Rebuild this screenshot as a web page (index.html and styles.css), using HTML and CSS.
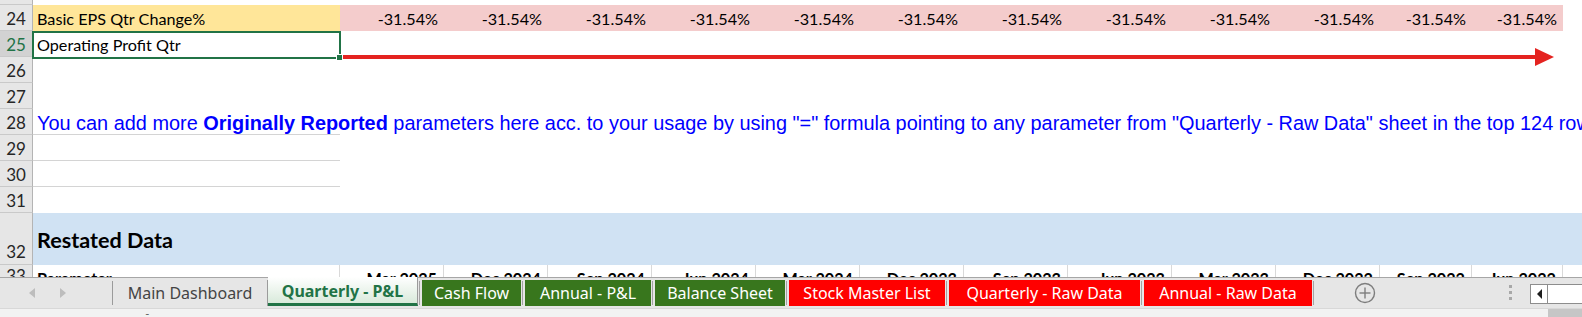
FILE: index.html
```html
<!DOCTYPE html>
<html>
<head>
<meta charset="utf-8">
<link rel="stylesheet" href="styles.css">
</head>
<body>
<div class="app">
  <div class="sheet">
    <div class="row r23">
      <div class="rh"></div><div class="c"></div>
    </div>
    <div class="row">
      <div class="rh">24</div>
      <div class="c yellow">Basic EPS Qtr Change%</div>
      <div class="c pink num">-31.54%</div>
      <div class="c pink num">-31.54%</div>
      <div class="c pink num">-31.54%</div>
      <div class="c pink num">-31.54%</div>
      <div class="c pink num">-31.54%</div>
      <div class="c pink num">-31.54%</div>
      <div class="c pink num">-31.54%</div>
      <div class="c pink num">-31.54%</div>
      <div class="c pink num">-31.54%</div>
      <div class="c pink num">-31.54%</div>
      <div class="c pink num">-31.54%</div>
      <div class="c pink num">-31.54%</div>
      <div class="c"></div>
    </div>
    <div class="row">
      <div class="rh rh-sel">25</div>
      <div class="c sel">Operating Profit Qtr<span class="handle"></span></div>
    </div>
    <div class="row">
      <div class="rh">26</div><div class="c"></div>
    </div>
    <div class="row">
      <div class="rh">27</div><div class="c"></div>
    </div>
    <div class="row">
      <div class="rh">28</div>
      <div class="c note lined"><span>You can add more <b>Originally Reported</b> parameters here acc. to your usage by using "=" formula pointing to any parameter from "Quarterly - Raw Data" sheet in the top 124 rows of the sheet</span></div>
    </div>
    <div class="row">
      <div class="rh">29</div><div class="c lined"></div>
    </div>
    <div class="row">
      <div class="rh">30</div><div class="c lined"></div>
    </div>
    <div class="row">
      <div class="rh">31</div><div class="c"></div>
    </div>
    <div class="row r32">
      <div class="rh">32</div>
      <div class="band"><span class="title">Restated Data</span></div>
    </div>
    <div class="row r33">
      <div class="rh">33</div>
      <div class="c hd vl">Parameter</div>
      <div class="c hd num vl">Mar 2025</div>
      <div class="c hd num vl">Dec 2024</div>
      <div class="c hd num vl">Sep 2024</div>
      <div class="c hd num vl">Jun 2024</div>
      <div class="c hd num vl">Mar 2024</div>
      <div class="c hd num vl">Dec 2023</div>
      <div class="c hd num vl">Sep 2023</div>
      <div class="c hd num vl">Jun 2023</div>
      <div class="c hd num vl">Mar 2023</div>
      <div class="c hd num vl">Dec 2022</div>
      <div class="c hd num vl">Sep 2022</div>
      <div class="c hd num vl">Jun 2022</div>
      <div class="c"></div>
    </div>
    <svg class="arrow" width="1214" height="20" viewBox="0 0 1214 20">
      <line x1="0" y1="9" x2="1197" y2="9" stroke="#e42320" stroke-width="4"/>
      <polygon points="1195,0 1214,9 1195,18" fill="#e42320"/>
    </svg>
  </div>
  <div class="tabbar">
    <div class="nav">
      <span class="tri tri-l"></span>
      <span class="tri tri-r"></span>
    </div>
    <div class="tab t-main">Main Dashboard</div>
    <div class="tab t-active">Quarterly - P&amp;L</div>
    <i class="sep"></i>
    <div class="tab green t-cash">Cash Flow</div>
    <i class="sep"></i>
    <div class="tab green t-apl">Annual - P&amp;L</div>
    <i class="sep"></i>
    <div class="tab green t-bs">Balance Sheet</div>
    <i class="sep"></i>
    <div class="tab red t-sml">Stock Master List</div>
    <i class="sep"></i>
    <div class="tab red t-qrd">Quarterly - Raw Data</div>
    <i class="sep"></i>
    <div class="tab red t-ard">Annual - Raw Data</div>
    <i class="sep"></i>
    <div class="addwrap">
      <svg width="22" height="22" viewBox="0 0 22 22">
        <circle cx="11" cy="11" r="9.5" fill="none" stroke="#7d7d7d" stroke-width="1.4"/>
        <line x1="11" y1="5.5" x2="11" y2="16.5" stroke="#7d7d7d" stroke-width="1.4"/>
        <line x1="5.5" y1="11" x2="16.5" y2="11" stroke="#7d7d7d" stroke-width="1.4"/>
      </svg>
    </div>
    <div class="dots"><i></i><i></i><i></i></div>
    <div class="hscroll">
      <div class="hbtn"><span class="btri"></span></div>
      <div class="htrack"></div>
    </div>
  </div>
  <div class="status">
    <span class="mark">ـ</span>
    <div class="corner"></div>
  </div>
</div>
</body>
</html>
```

FILE: styles.css
```css
* { box-sizing: border-box; margin: 0; padding: 0; }

html, body {
  margin: 0;
  width: 1582px;
  height: 317px;
  overflow: hidden;
  background: #ffffff;
  font-family: Lato, "Noto Sans", sans-serif;
}

.app {
  display: flex;
  flex-direction: column;
  width: 1582px;
  height: 317px;
}

.sheet {
  position: relative;
  height: 277px;
  flex: none;
  overflow: hidden;
}

.row {
  display: grid;
  grid-template-columns: 33px 307px repeat(10, 104px) 92px 91px 1fr;
  height: 26px;
}

.row.r23 { height: 5px; }
.row.r32 { height: 52px; }

.rh {
  background: #e6e6e6;
  border-right: 1px solid #b4b4b4;
  border-bottom: 1px solid #c9c9c9;
  color: #262626;
  font-size: 17px;
  display: flex;
  align-items: flex-end;
  justify-content: center;
  padding-bottom: 1px;
  line-height: 20px;
}

.rh-sel {
  background: #d2d2d2;
  color: #217346;
}

.c {
  position: relative;
  font-size: 16.2px;
  color: #000;
  padding: 0 4px 2px 4px;
  display: flex;
  align-items: flex-end;
  white-space: nowrap;
  line-height: 20px;
}

.c.num { justify-content: flex-end; padding-right: 6px; }

.yellow { background: #ffe699; }
.pink { background: #f4cccc; }

.sel::after {
  content: "";
  position: absolute;
  left: -1px;
  top: 0;
  right: -1px;
  bottom: -2px;
  border: 2px solid #217346;
}

.handle {
  position: absolute;
  right: -3px;
  bottom: -4px;
  width: 7px;
  height: 7px;
  background: #217346;
  border: 1px solid #ffffff;
  z-index: 2;
}

.lined { border-bottom: 1px solid #d4d4d4; }

.note {
  font-family: "Liberation Sans", Arial, sans-serif;
  font-size: 19.9px;
  color: #0000ff;
  overflow: visible;
  padding-bottom: 1px;
  z-index: 1;
}

.note span { white-space: pre; }
.note b { font-weight: bold; }

.band {
  grid-column: 2 / -1;
  background: #d0e2f3;
  display: flex;
  align-items: center;
  padding-left: 4px;
}

.title {
  font-weight: 700;
  font-size: 21.6px;
  color: #000;
  padding-top: 2px;
}

.r32 .rh { padding-bottom: 2px; }

.r33 .rh { align-items: flex-start; padding-top: 1px; }

.hd {
  font-weight: 700;
  align-items: flex-start;
  padding-top: 4px;
}

.vl { border-right: 1px solid #d9d9d9; }

.arrow {
  position: absolute;
  left: 340px;
  top: 48px;
}

/* Tab bar */
.tabbar {
  flex: none;
  height: 31px;
  background: #e6e6e6;
  border-top: 1px solid #a6a6a6;
  display: flex;
  align-items: flex-start;
  font-family: "Noto Sans", "Open Sans", sans-serif;
  font-size: 16px;
}

.nav {
  width: 113px;
  height: 24px;
  margin-top: 3px;
  border-right: 1px solid #9b9b9b;
  display: flex;
  align-items: center;
  padding-left: 29px;
  gap: 25px;
}

.tri {
  width: 0;
  height: 0;
  border-top: 5px solid transparent;
  border-bottom: 5px solid transparent;
}
.tri-l { border-right: 6px solid #bdbdbd; }
.tri-r { border-left: 6px solid #bdbdbd; }

.tab {
  height: 26px;
  margin-top: 2px;
  display: flex;
  align-items: center;
  justify-content: center;
  white-space: nowrap;
  color: #ffffff;
}

.t-main {
  width: 155px;
  color: #444444;
  border-right: 1px solid #9b9b9b;
  height: 26px;
}

.t-active {
  width: 150px;
  height: 29px;
  margin-top: -1px;
  background: linear-gradient(#ffffff, #d9eadb);
  border-bottom: 3px solid #217346;
  border-right: 1px solid #9b9b9b;
  color: #217346;
  font-weight: 700;
  padding-top: 2px;
}

.sep {
  width: 1px;
  height: 24px;
  margin: 3px 2px 0 1px;
  background: #a3a3a3;
}

.green { background: #38761d; }
.red { background: #ff0000; }

.t-cash { width: 99px; }
.t-apl { width: 126px; }
.t-bs { width: 130px; }
.t-sml { width: 156px; }
.t-qrd { width: 191px; }
.t-ard { width: 168px; }

.addwrap {
  width: 97px;
  height: 28px;
  display: flex;
  align-items: center;
  justify-content: center;
  margin-top: 1px;
}

.dots {
  width: 117px;
  height: 28px;
  display: flex;
  flex-direction: column;
  align-items: flex-start;
  justify-content: center;
  gap: 3px;
  padding-left: 96px;
}
.dots i {
  display: block;
  width: 3px;
  height: 3px;
  background: #a8a8a8;
}

.hscroll {
  flex: 1;
  height: 20px;
  margin-top: 6px;
  border: 1px solid #8d8d8d;
  border-right: none;
  background: #ffffff;
  display: flex;
}

.hbtn {
  width: 17px;
  border-right: 1px solid #8d8d8d;
  display: flex;
  align-items: center;
  justify-content: center;
}

.btri {
  width: 0;
  height: 0;
  border-top: 5px solid transparent;
  border-bottom: 5px solid transparent;
  border-right: 5px solid #1e1e1e;
}

.htrack { flex: 1; }

.status {
  flex: 1;
  background: #f2f2f2;
  border-top: 1px solid #d8d8d8;
  display: flex;
  align-items: flex-start;
  position: relative;
}

.mark {
  margin-left: 146px;
  font-size: 9px;
  color: #555;
  line-height: 6px;
}

.corner {
  margin-left: auto;
  width: 34px;
  height: 100%;
  background: #c6c6c6;
}
```
